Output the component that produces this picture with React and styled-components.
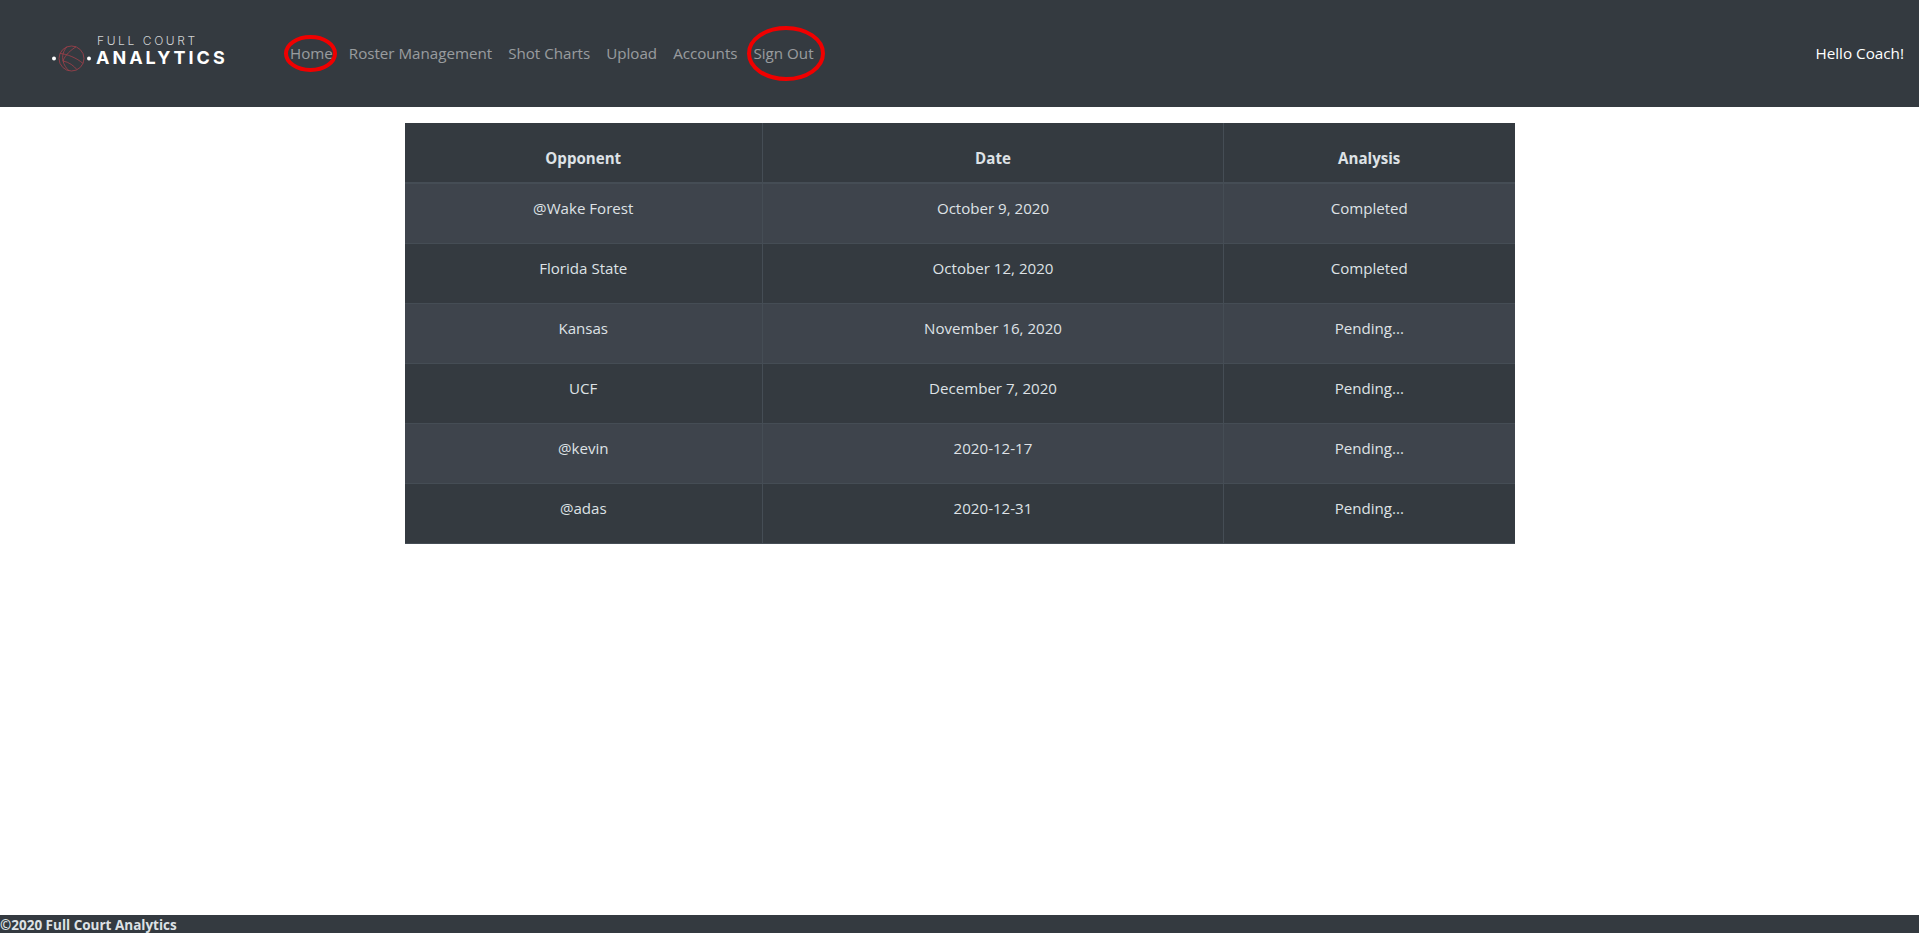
import * as React from 'react';
import styled, { createGlobalStyle } from 'styled-components';

const GlobalStyle = createGlobalStyle`
  html, body { margin: 0; padding: 0; background: #fff; }
  body {
    font-family: "Open Sans", "Noto Sans", sans-serif;
    font-size: 15.1px;
    line-height: 24px;
    color: #212529;
  }
`;

const Page = styled.div`
  min-height: 100vh;
  display: flex;
  flex-direction: column;
`;

const Navbar = styled.nav`
  height: 107px;
  background: #343a40;
  display: flex;
  align-items: center;
  padding: 0 15px 1px 52px;
  box-sizing: border-box;
`;

const Brand = styled.div`
  width: 230px;
  display: flex;
  align-items: flex-end;
  flex-shrink: 0;
  padding-bottom: 3px;
`;

const BrandMark = styled.svg`
  width: 41px;
  height: 30px;
  margin-right: 3px;
  margin-bottom: -4px;
  flex-shrink: 0;
`;

const BrandWords = styled.div`
  display: flex;
  flex-direction: column;
  color: #fff;
  font-family: Inter, "Open Sans", sans-serif;
`;

const BrandTop = styled.span`
  font-size: 12px;
  line-height: 12px;
  font-weight: 300;
  letter-spacing: 2.6px;
  color: #d0d2d4;
  padding-left: 1px;
`;

const BrandBottom = styled.span`
  font-size: 18px;
  line-height: 20px;
  font-weight: 700;
  letter-spacing: 3px;
  margin-top: 1px;
`;

const NavList = styled.div`
  display: flex;
  align-items: center;
  flex: 1;
  font-size: 15.15px;
`;

const NavLink = styled.a`
  position: relative;
  padding: 8px;
  color: rgba(255, 255, 255, 0.5);
  white-space: nowrap;
`;

const Ring = styled.svg`
  position: absolute;
  left: ${props => props.$left}px;
  top: ${props => props.$top}px;
  width: ${props => props.$width}px;
  height: ${props => props.$height}px;
  overflow: visible;
  pointer-events: none;
`;

const Hello = styled.span`
  color: #fff;
  font-size: 15.25px;
  white-space: nowrap;
`;

const Main = styled.main`
  flex: 1;
  width: 1110px;
  margin: 16px auto 0;
`;

const Table = styled.table`
  width: 1110px;
  table-layout: fixed;
  border-collapse: collapse;
  background: #343a40;
  color: #dee2e6;
`;

const HeadCell = styled.th`
  height: 60px;
  box-sizing: border-box;
  padding: 12px;
  text-align: center;
  vertical-align: bottom;
  font-weight: 700;
  border: 1px solid #454d55;
  border-top: 0;
  border-bottom-width: 2px;
  &:first-child { border-left: 0; }
  &:last-child { border-right: 0; }
`;

const Row = styled.tr`
  background: ${props => (props.$striped ? '#3e444c' : 'transparent')};
`;

const Cell = styled.td`
  height: 60px;
  box-sizing: border-box;
  padding: 12px;
  text-align: center;
  vertical-align: top;
  border: 1px solid #454d55;
  &:first-child { border-left: 0; }
  &:last-child { border-right: 0; }
`;

const Footer = styled.footer`
  height: 18px;
  background: #343a40;
  color: #dee2e6;
  font-size: 13.5px;
  font-weight: 700;
  line-height: 20px;
  overflow: hidden;
`;

const games = [
  ['@Wake Forest', 'October 9, 2020', 'Completed'],
  ['Florida State', 'October 12, 2020', 'Completed'],
  ['Kansas', 'November 16, 2020', 'Pending...'],
  ['UCF', 'December 7, 2020', 'Pending...'],
  ['@kevin', '2020-12-17', 'Pending...'],
  ['@adas', '2020-12-31', 'Pending...'],
];

function Logo() {
  return (
    <BrandMark viewBox="0 0 41 30">
      <circle cx="2" cy="16.5" r="2" fill="#fff" />
      <circle cx="37" cy="16.5" r="2" fill="#fff" />
      <g fill="none" stroke="#a5404a" strokeWidth="0.8">
        <circle cx="19.5" cy="16.5" r="12.5" />
        <path d="M15 4.9 C11 9 10 14 11 19 C12 23 14 26 17 28.8" />
        <path d="M8 11.5 C15 12 25 16 31 21.5" />
        <path d="M24 4.8 C19 8 13 13 11 19" />
        <path d="M11 19 C17 20 22 24 25 27.7" />
      </g>
    </BrandMark>
  );
}

function RedRing({ left, top, width, height }) {
  return (
    <Ring $left={left} $top={top} $width={width} $height={height} viewBox={`0 0 ${width} ${height}`}>
      <ellipse
        cx={width / 2}
        cy={height / 2}
        rx={width / 2 - 2}
        ry={height / 2 - 2}
        fill="none"
        stroke="#f00000"
        strokeWidth="4"
      />
    </Ring>
  );
}

export default function App() {
  return (
    <Page>
      <GlobalStyle />
      <Navbar>
        <Brand>
          <Logo />
          <BrandWords>
            <BrandTop>FULL COURT</BrandTop>
            <BrandBottom>ANALYTICS</BrandBottom>
          </BrandWords>
        </Brand>
        <NavList>
          <NavLink>
            Home
            <RedRing left={2} top={2} width={53} height={37} />
          </NavLink>
          <NavLink>Roster Management</NavLink>
          <NavLink>Shot Charts</NavLink>
          <NavLink>Upload</NavLink>
          <NavLink>Accounts</NavLink>
          <NavLink>
            Sign Out
            <RedRing left={1} top={-7} width={78} height={55} />
          </NavLink>
        </NavList>
        <Hello>Hello Coach!</Hello>
      </Navbar>
      <Main>
        <Table>
          <colgroup>
            <col style={{ width: 358 }} />
            <col style={{ width: 461 }} />
            <col style={{ width: 291 }} />
          </colgroup>
          <thead>
            <tr>
              <HeadCell>Opponent</HeadCell>
              <HeadCell>Date</HeadCell>
              <HeadCell>Analysis</HeadCell>
            </tr>
          </thead>
          <tbody>
            {games.map((game, i) => (
              <Row key={game[0]} $striped={i % 2 === 0}>
                <Cell>{game[0]}</Cell>
                <Cell>{game[1]}</Cell>
                <Cell>{game[2]}</Cell>
              </Row>
            ))}
          </tbody>
        </Table>
      </Main>
      <Footer>©2020 Full Court Analytics</Footer>
    </Page>
  );
}
